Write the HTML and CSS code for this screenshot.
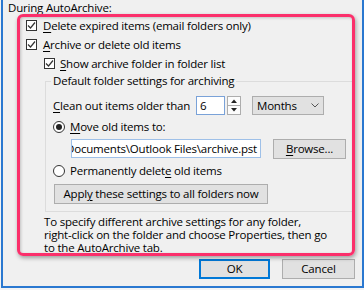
FILE: index.html
```html
<!DOCTYPE html>
<html lang="en">
<head>
  <meta charset="UTF-8">
  <title>AutoArchive</title>
  <link rel="stylesheet" href="styles.css">
</head>
<body>
  <div class="window">
    <div class="caption">During AutoArchive:</div>

    <div class="options">
      <label class="check">
        <svg class="box" viewBox="0 0 11 11"><rect x="0.5" y="0.5" width="10" height="10" /><polyline points="2,5.5 4.5,8 9,2.5" /></svg>
        <span><u>D</u>elete expired items (email folders only)</span>
      </label>
      <label class="check">
        <svg class="box" viewBox="0 0 11 11"><rect x="0.5" y="0.5" width="10" height="10" /><polyline points="2,5.5 4.5,8 9,2.5" /></svg>
        <span><u>A</u>rchive or delete old items</span>
      </label>
      <label class="check indent">
        <svg class="box" viewBox="0 0 11 11"><rect x="0.5" y="0.5" width="10" height="10" /><polyline points="2,5.5 4.5,8 9,2.5" /></svg>
        <span><u>S</u>how archive folder in folder list</span>
      </label>

      <fieldset class="group">
        <legend>Default folder settings for archiving</legend>

        <div class="row">
          <span class="clean-label"><u>C</u>lean out items older than</span>
          <div class="spin-input">6</div>
          <svg class="spinner" viewBox="0 0 14 19">
            <rect x="0.5" y="0.5" width="13" height="18" />
            <line x1="1" y1="9.5" x2="13" y2="9.5" />
            <polygon points="4,7 10,7 7,3.5" />
            <polygon points="4,12 10,12 7,15.5" />
          </svg>
          <div class="dropdown">
            <span>Months</span>
            <svg class="chevron" viewBox="0 0 8 5"><polyline points="0.5,0.5 4,4 7.5,0.5" /></svg>
          </div>
        </div>

        <label class="radio move">
          <svg class="dot" viewBox="0 0 12 12"><circle class="ring" cx="6" cy="6" r="5.5" /><circle class="fill" cx="6" cy="6" r="3" /></svg>
          <span><u>M</u>ove old items to:</span>
        </label>

        <div class="row path-row">
          <div class="path-input"><span>C:\Users\Owner\Documents\Outlook Files\archive.pst</span></div>
          <button class="btn browse"><u>B</u>rowse...</button>
        </div>

        <label class="radio delete">
          <svg class="dot" viewBox="0 0 12 12"><circle class="ring" cx="6" cy="6" r="5.5" /></svg>
          <span>Permanently delet<u>e</u> old items</span>
        </label>

        <button class="btn apply">Appl<u>y</u> these settings to all folders now</button>
      </fieldset>

      <p class="note">To specify different archive settings for any folder,<br>right-click on the folder and choose Properties, then go<br>to the AutoArchive tab.</p>
    </div>

    <div class="actions">
      <button class="btn default">OK</button>
      <button class="btn cancel">Cancel</button>
    </div>
  </div>

  <div class="highlight"></div>
</body>
</html>
```

FILE: styles.css
```css
* {
  margin: 0;
  padding: 0;
  box-sizing: border-box;
}

body {
  font-family: 'Open Sans', 'Noto Sans', sans-serif;
  font-size: 11.5px;
  letter-spacing: -0.2px;
  color: #000;
  background: #f3f3f3;
  height: 290px;
  overflow: hidden;
}

.window {
  margin-left: 1px;
  width: 363px;
  height: 288px;
  border: 2px solid #2a78d0;
  border-top: none;
  background: #f0f0f0;
}

.caption {
  padding-left: 5px;
  height: 16px;
  line-height: 16px;
}

.options {
  padding-left: 23px;
}

u {
  text-decoration-thickness: 1px;
  text-underline-offset: 2px;
}

.check,
.radio {
  display: flex;
  align-items: center;
  height: 19px;
  line-height: 19px;
  white-space: nowrap;
}

.check {
  gap: 6px;
}

.check.indent {
  margin-left: 18px;
  gap: 5px;
}

.box {
  width: 11px;
  height: 11px;
  flex: none;
}

.box rect {
  fill: #fff;
  stroke: #333;
}

.box polyline {
  fill: none;
  stroke: #333;
  stroke-width: 1.2;
}

.group {
  margin-left: 19px;
  width: 308px;
  border: 1px solid #dcdcdc;
  padding: 7px 0 7px 7px;
  min-width: 0;
}

.group legend {
  line-height: 16px;
  margin-left: -2px;
  padding: 0 2px;
}

.row {
  display: flex;
  align-items: center;
  height: 19px;
  line-height: 19px;
}

.clean-label {
  width: 143px;
  white-space: nowrap;
}

.spin-input {
  width: 29px;
  height: 19px;
  line-height: 17px;
  padding-left: 3px;
  background: #fff;
  border: 1px solid #7aa2d8;
}

.spinner {
  width: 14px;
  height: 19px;
  margin-left: 2px;
}

.spinner rect {
  fill: #fcfcfc;
  stroke: #adadad;
}

.spinner line {
  stroke: #adadad;
}

.spinner polygon {
  fill: #222;
}

.dropdown {
  display: flex;
  align-items: center;
  margin-left: 11px;
  width: 72px;
  height: 19px;
  line-height: 17px;
  padding-left: 4px;
  background: #e1e1e1;
  border: 1px solid #adadad;
}

.chevron {
  width: 8px;
  height: 5px;
  margin-left: auto;
  margin-right: 4px;
}

.chevron polyline {
  fill: none;
  stroke: #555;
}

.radio {
  gap: 5px;
}

.radio.move {
  margin-top: 2px;
}

.radio.delete {
  margin-top: 2px;
}

.dot {
  width: 12px;
  height: 12px;
  flex: none;
}

.dot .ring {
  fill: #fff;
  stroke: #333;
}

.dot .fill {
  fill: #222;
}

.path-row {
  margin-top: 3px;
  height: 20px;
  align-items: flex-start;
}

.path-input {
  display: flex;
  justify-content: flex-end;
  margin-left: 18px;
  width: 190px;
  height: 19px;
  line-height: 17px;
  padding-right: 3px;
  overflow: hidden;
  white-space: nowrap;
  background: #fff;
  border: 1px solid #9ec0e8;
}

.btn {
  font: inherit;
  letter-spacing: inherit;
  color: #000;
  background: #e1e1e1;
  border: 1px solid #adadad;
  height: 20px;
  line-height: 18px;
  text-align: center;
}

.browse {
  margin-left: 12px;
  width: 73px;
}

.apply {
  display: block;
  margin-top: 4px;
  margin-left: 1px;
  width: 214px;
}

.note {
  margin: 3px 0 0 18px;
  line-height: 13px;
}

.actions {
  display: flex;
  justify-content: flex-end;
  gap: 12px;
  margin-top: 5px;
  padding-right: 7px;
}

.actions .default {
  width: 71px;
  border: 2px solid #0078d7;
  line-height: 16px;
}

.actions .cancel {
  width: 73px;
}

.highlight {
  position: absolute;
  left: 17px;
  top: 14px;
  width: 338px;
  height: 242px;
  border: 3px solid #fb2f6b;
  border-radius: 6px;
  box-shadow: 1px 2px 4px rgba(0, 0, 0, 0.35), inset 1px 1px 3px rgba(0, 0, 0, 0.2);
  pointer-events: none;
}
```
